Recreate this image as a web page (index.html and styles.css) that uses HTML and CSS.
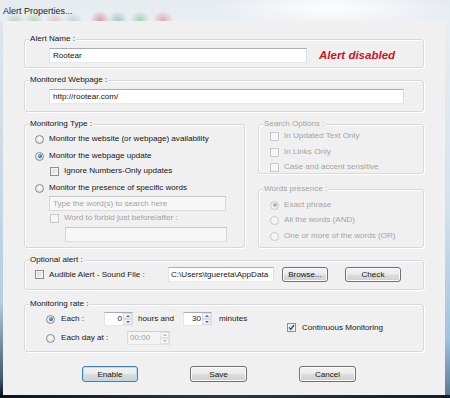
FILE: index.html
```html
<!DOCTYPE html>
<html>
<head>
<meta charset="utf-8">
<link rel="stylesheet" href="styles.css">
</head>
<body>
<div class="window">
  <div class="titlebar"><span class="title">Alert Properties...</span></div>
  <div class="mid">
    <div class="frame-l"></div>
    <div class="client">
      <fieldset class="grp wide g-name">
        <legend>Alert Name :</legend>
        <div class="row name-row">
          <div class="tb tb-name">Rootear</div>
          <span class="status">Alert disabled</span>
        </div>
      </fieldset>

      <fieldset class="grp wide g-url">
        <legend>Monitored Webpage :</legend>
        <div class="row url-row"><div class="tb tb-url">http://rootear.com/</div></div>
      </fieldset>

      <div class="cols">
        <fieldset class="grp g-type">
          <legend>Monitoring Type :</legend>
          <div class="row opt r1"><span class="radio"></span><span class="lbl">Monitor the website (or webpage) availability</span></div>
          <div class="row opt r2"><span class="radio on"></span><span class="lbl">Monitor the webpage update</span></div>
          <div class="row sub c1"><span class="check"></span><span class="lbl">Ignore Numbers-Only updates</span></div>
          <div class="row opt r3"><span class="radio"></span><span class="lbl">Monitor the presence of specific words</span></div>
          <div class="tb tb-off tb-words">Type the word(s) to search here</div>
          <div class="row sub c2 off"><span class="check"></span><span class="lbl">Word to forbid just before/after :</span></div>
          <div class="tb tb-off tb-forbid"></div>
        </fieldset>

        <div class="rightcol">
          <fieldset class="grp g-search off">
            <legend>Search Options :</legend>
            <div class="row ropt s1"><span class="check"></span><span class="lbl">In Updated Text Only</span></div>
            <div class="row ropt s2"><span class="check"></span><span class="lbl">In Links Only</span></div>
            <div class="row ropt s3"><span class="check"></span><span class="lbl">Case and accent sensitive</span></div>
          </fieldset>
          <fieldset class="grp g-words off">
            <legend>Words presence :</legend>
            <div class="row ropt w1"><span class="radio on"></span><span class="lbl">Exact phrase</span></div>
            <div class="row ropt w2"><span class="radio"></span><span class="lbl">All the words (AND)</span></div>
            <div class="row ropt w3"><span class="radio"></span><span class="lbl">One or more of the words (OR)</span></div>
          </fieldset>
        </div>
      </div>

      <fieldset class="grp wide g-opt">
        <legend>Optional alert :</legend>
        <div class="row opt-row">
          <span class="check"></span>
          <span class="lbl lbl-sound">Audible Alert - Sound File :</span>
          <div class="tb tb-path">C:\Users\tguereta\AppData</div>
          <div class="btn btn-browse">Browse...</div>
          <div class="btn btn-check">Check</div>
        </div>
      </fieldset>

      <fieldset class="grp wide g-rate">
        <legend>Monitoring rate :</legend>
        <div class="rate">
          <div class="rate-left">
            <div class="row rrow rr1">
              <span class="radio on"></span>
              <span class="lbl lbl-each">Each :</span>
              <div class="spin"><span class="val">0</span><span class="arrows"><i class="up"></i><i class="dn"></i></span></div>
              <span class="lbl lbl-hours">hours and</span>
              <div class="spin"><span class="val">30</span><span class="arrows"><i class="up"></i><i class="dn"></i></span></div>
              <span class="lbl lbl-min">minutes</span>
            </div>
            <div class="row rrow rr2">
              <span class="radio"></span>
              <span class="lbl lbl-day">Each day at :</span>
              <div class="spin spin-off"><span class="val">00:00</span><span class="arrows"><i class="up"></i><i class="dn"></i></span></div>
            </div>
          </div>
          <div class="row cont">
            <span class="check checked"><svg width="7" height="7" viewBox="0 0 7 7"><path d="M1 3.4 L2.8 5.4 L6 1" fill="none" stroke="#2a4f86" stroke-width="1.4"/></svg></span>
            <span class="lbl">Continuous Monitoring</span>
          </div>
        </div>
      </fieldset>

      <div class="buttons">
        <div class="btn btn-main default">Enable</div>
        <div class="btn btn-main">Save</div>
        <div class="btn btn-main">Cancel</div>
      </div>
    </div>
    <div class="frame-r"></div>
  </div>
  <div class="frame-b"></div>
</div>
</body>
</html>
```

FILE: styles.css
```css
html, body {
  margin: 0;
  padding: 0;
}
body {
  font-family: "Liberation Sans", Arial, sans-serif;
  font-size: 8.1px;
  color: #151515;
  background: #dfe6ee;
}
.window {
  width: 450px;
  height: 398px;
  display: flex;
  flex-direction: column;
  overflow: hidden;
}
.titlebar {
  height: 21px;
  flex: none;
  display: flex;
  align-items: center;
  padding-left: 3px;
  font-size: 9px;
  color: #1b1b1b;
  background:
    radial-gradient(ellipse 10px 8px at 15px 21px, rgba(120,150,130,.35), rgba(120,150,130,0)),
    radial-gradient(ellipse 10px 8px at 34px 21px, rgba(90,170,90,.35), rgba(90,170,90,0)),
    radial-gradient(ellipse 10px 8px at 55px 21px, rgba(220,110,130,.35), rgba(220,110,130,0)),
    radial-gradient(ellipse 10px 8px at 73px 21px, rgba(130,140,150,.3), rgba(130,140,150,0)),
    radial-gradient(ellipse 10px 9px at 100px 20px, rgba(200,60,80,.45), rgba(200,60,80,0)),
    radial-gradient(ellipse 10px 9px at 118px 20px, rgba(80,160,150,.45), rgba(80,160,150,0)),
    radial-gradient(ellipse 10px 9px at 140px 20px, rgba(70,170,90,.4), rgba(70,170,90,0)),
    radial-gradient(ellipse 10px 9px at 163px 20px, rgba(210,70,90,.4), rgba(210,70,90,0)),
    radial-gradient(ellipse 120px 22px at 330px 8px, rgba(255,255,255,.9), rgba(255,255,255,0)),
    linear-gradient(to bottom, #e6ebf0, #e9eef2);
}
.mid {
  height: 374px;
  flex: none;
  display: flex;
}
.frame-l {
  width: 3px;
  background: linear-gradient(to bottom, #dfe6ec, #b7cde0 75%, #3c5572 96%, #10161f);
}
.frame-r {
  width: 5px;
  background: linear-gradient(to bottom, #e9eef3, #d4e2ee 50%, #9fc3de 85%, #5a7894);
}
.frame-b {
  height: 3px;
  flex: none;
  background: linear-gradient(to right, #0f141c, #2e3846 50%, #161b24);
}
.client {
  width: 442px;
  background: #f0f0f0;
  padding: 12px 0 0 21px;
  box-sizing: border-box;
}

/* group boxes */
.grp {
  margin: 0;
  padding: 0;
  border: 1px solid #d5dadf;
  border-radius: 3px;
  box-shadow: 1px 1px 0 #fff, inset 1px 1px 0 #fff;
  min-width: 0;
  box-sizing: border-box;
}
.grp legend {
  margin-left: 4px;
  padding: 0 1px;
  height: 12px;
  line-height: 12px;
  background: #f0f0f0;
}
.wide { width: 400px; }
.off, .off legend { color: #a3a3a3; }

.row {
  display: flex;
  align-items: center;
}
.lbl {
  white-space: nowrap;
  line-height: 10px;
}

/* textboxes */
.tb {
  height: 15px;
  box-sizing: border-box;
  border: 1px solid;
  border-color: #abadb3 #dbdfe6 #e3e9ef #e2e3ea;
  background: #fff;
  padding: 0 3px;
  line-height: 13px;
  white-space: nowrap;
  overflow: hidden;
  flex: none;
}
.tb-off {
  background: #f7f7f7;
  border-color: #c6c6c6 #d6d6d6 #dcdcdc #d6d6d6;
  color: #a3a3a3;
}

.name-row { padding: 3px 0 4px 24px; }
.tb-name { width: 258px; }
.status {
  margin-left: 12px;
  color: #d2121c;
  font-weight: bold;
  font-style: italic;
  font-size: 11.5px;
  line-height: 15px;
}
.g-url { margin-top: 6px; }
.url-row { padding: 3px 0 7px 24px; }
.tb-url { width: 355px; }

/* columns */
.cols {
  display: flex;
  align-items: flex-start;
  gap: 13px;
  margin-top: 6px;
}
.g-type { width: 221px; height: 130px; }
.rightcol { width: 166px; display: flex; flex-direction: column; }
.g-search { height: 56px; }
.g-words { height: 65px; margin-top: 9px; }

.opt { height: 14px; margin-left: 10px; gap: 5px; }
.sub { height: 14px; margin-left: 25px; gap: 5px; }
.r1 { margin-top: 2px; }
.r2 { margin-top: 3px; }
.c1 { margin-top: 1px; }
.r3 { margin-top: 3px; }
.tb-words { margin: 1px 0 0 24px; width: 177px; }
.c2 { margin-top: 0; }
.tb-forbid { margin: 2px 0 0 40px; width: 162px; }

.ropt { height: 10px; margin-left: 11px; gap: 5px; }
.s1 { margin-top: 1px; }
.s2 { margin-top: 6px; }
.s3 { margin-top: 5px; }
.w1 { margin-top: 5px; }
.w2 { margin-top: 5px; }
.w3 { margin-top: 6px; }

/* radios & checks */
.radio {
  width: 9px;
  height: 9px;
  flex: none;
  box-sizing: border-box;
  border-radius: 50%;
  border: 1px solid #8c8e90;
  background: radial-gradient(circle at 50% 40%, #fdfdfd, #e4e4e4 65%, #cfd0d2);
  display: flex;
  align-items: center;
  justify-content: center;
}
.radio.on::after {
  content: "";
  width: 4px;
  height: 4px;
  border-radius: 50%;
  background: radial-gradient(circle at 40% 35%, #86bff0, #1d56a6 75%);
}
.off .radio {
  border-color: #c8c8c8;
  background: #f4f4f4;
}
.off .radio.on::after {
  background: #b3b3b3;
}
.check {
  width: 9px;
  height: 9px;
  flex: none;
  box-sizing: border-box;
  border: 1px solid #8c8e90;
  background: linear-gradient(135deg, #d8dade, #f6f6f6);
  box-shadow: inset 0 0 0 1px #f4f4f4;
  display: flex;
  align-items: center;
  justify-content: center;
}
.off .check {
  border-color: #c8c8c8;
  background: #f6f6f6;
  box-shadow: none;
}
.check.checked svg { display: block; }

/* optional alert */
.g-opt { margin-top: 6px; }
.opt-row { height: 15px; margin: 1px 0 7px 10px; }
.lbl-sound { width: 119px; margin-left: 5px; }
.tb-path { width: 106px; padding: 0 2px; }
.btn {
  height: 15px;
  box-sizing: border-box;
  border: 1px solid #707070;
  border-radius: 3px;
  background: linear-gradient(to bottom, #f3f3f3 0%, #ebebeb 48%, #dddddd 52%, #cfcfcf 100%);
  box-shadow: inset 0 0 0 1px #fbfbfb;
  display: flex;
  align-items: center;
  justify-content: center;
  white-space: nowrap;
  flex: none;
}
.btn-browse { width: 46px; margin-left: 8px; }
.btn-check { width: 56px; margin-left: 17px; }

/* monitoring rate */
.g-rate { margin-top: 8px; }
.rate { display: flex; padding-bottom: 6px; }
.rate-left { width: 262px; }
.rrow { height: 14px; margin-left: 21px; }
.rr1 { margin-top: 2px; }
.rr2 { margin-top: 5px; }
.rrow .lbl { margin-left: 6px; }
.lbl-each { width: 43px; }
.lbl-hours { width: 45px; }
.rrow .lbl-hours { margin-left: 5px; }
.rrow .lbl-min { margin-left: 7px; }
.lbl-day { width: 66px; }
.spin {
  width: 29px;
  height: 14px;
  box-sizing: border-box;
  border: 1px solid;
  border-color: #abadb3 #dbdfe6 #e3e9ef #e2e3ea;
  background: #fff;
  display: flex;
  flex: none;
}
.spin .val {
  flex: 1;
  text-align: right;
  line-height: 12px;
  padding-right: 1px;
}
.spin .arrows {
  width: 9px;
  display: flex;
  flex-direction: column;
}
.spin .arrows i {
  flex: 1;
  display: flex;
  align-items: center;
  justify-content: center;
  border: 1px solid #d9dde3;
  background: linear-gradient(#fbfbfb, #e8ebee);
}
.spin .up::after {
  content: "";
  border-left: 2px solid transparent;
  border-right: 2px solid transparent;
  border-bottom: 2px solid #58697f;
}
.spin .dn::after {
  content: "";
  border-left: 2px solid transparent;
  border-right: 2px solid transparent;
  border-top: 2px solid #58697f;
}
.spin-off {
  width: 43px;
  background: #f4f4f4;
  border-color: #cfcfcf #dcdcdc #e2e2e2 #dcdcdc;
  color: #a3a3a3;
}
.spin-off .val {
  text-align: left;
  padding-left: 2px;
}
.spin-off .arrows i {
  border-color: #e2e2e2;
  background: #f6f6f6;
}
.spin-off .up::after { border-bottom-color: #b5b5b5; }
.spin-off .dn::after { border-top-color: #b5b5b5; }
.cont {
  align-self: center;
  gap: 6px;
  height: 12px;
}

/* bottom buttons */
.buttons {
  display: flex;
  gap: 52px;
  margin: 14px 0 0 58px;
}
.btn-main { height: 16px; width: 57px; }
.btn-main.default {
  width: 56px;
  border-color: #3c7fb1;
  box-shadow: inset 0 0 0 1px #b8e0f5;
}
```
